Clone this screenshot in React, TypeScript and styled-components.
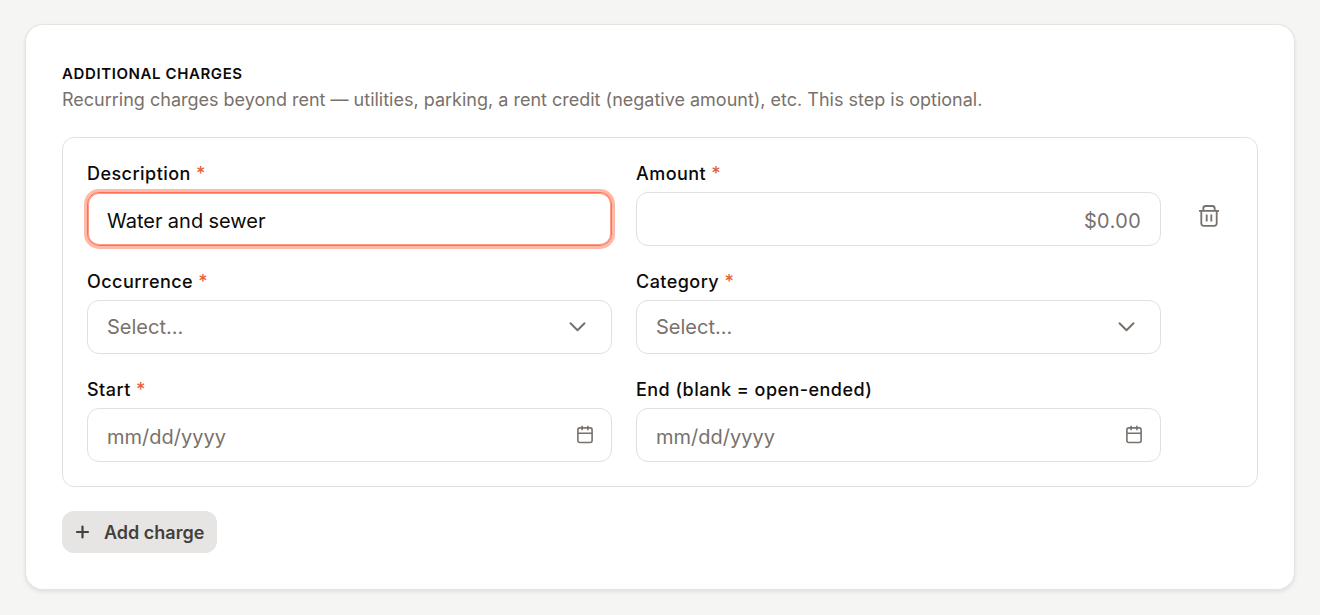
import React, { useId } from "react";
import styled, { createGlobalStyle } from "styled-components";

const GlobalStyle = createGlobalStyle`
  *, *::before, *::after { box-sizing: border-box; }
  body {
    margin: 0;
    background: #f5f5f4;
    color: #0c0a09;
    font-family: Inter, "Liberation Sans", sans-serif;
    font-size: 18px;
    -webkit-font-smoothing: antialiased;
  }
  button, input, select { font: inherit; letter-spacing: inherit; color: inherit; }
`;

const Page = styled.main`
  padding: 24px 25px;
`;

const Card = styled.section`
  display: flex;
  flex-direction: column;
  gap: 24px;
  padding: 37px 36px 36px;
  background: #fff;
  border: 1px solid #e5e4e3;
  border-radius: 18px;
  box-shadow: 0 2px 4px rgba(12, 10, 9, 0.09);
`;

const Title = styled.h2`
  margin: 0;
  font-size: 15px;
  font-weight: 600;
  line-height: 24px;
  letter-spacing: 0.04em;
  text-transform: uppercase;
`;

const Subtitle = styled.p`
  margin: 0;
  line-height: 27px;
  color: #79716b;
`;

const ChargeBox = styled.div`
  display: flex;
  align-items: flex-start;
  gap: 24px;
  padding: 24px;
  border: 1px solid #e0e0e0;
  border-radius: 12px;
`;

const FieldGrid = styled.div`
  flex: 1;
  display: grid;
  grid-template-columns: repeat(2, minmax(0, 1fr));
  gap: 24px;
`;

const FieldRoot = styled.div`
  display: flex;
  flex-direction: column;
  gap: 6px;
`;

const Label = styled.label`
  line-height: 24px;
  font-weight: 500;
  letter-spacing: 0.025em;
`;

const Required = styled.span`
  color: #e2603a;
`;

const Control = styled.div`
  display: flex;
  align-items: center;
  height: 54px;
  background: #fff;
  border: 1px solid #e0e0e0;
  border-radius: 12px;
  color: #79716b;

  &:has(input:focus) {
    border-color: #ff6f50;
    box-shadow: 0 0 0 3px #ffb9a9, inset 0 0 0 1px #ff9c86;
  }
`;

const TextInput = styled.input<{ $align?: "right" }>`
  flex: 1;
  min-width: 0;
  height: 52px;
  padding: 4px 19px 0;
  border: 0;
  outline: 0;
  background: transparent;
  font-size: 20px;
  font-variant-numeric: tabular-nums;
  text-align: ${(p) => p.$align ?? "left"};
  color: #0c0a09;
  caret-color: transparent;

  &::placeholder { color: #79716b; opacity: 1; }
`;

const SelectWrap = styled(Control)`
  display: grid;
  grid-template-columns: minmax(0, 1fr);

  > * { grid-area: 1 / 1; }
  > svg { justify-self: end; margin-right: 24px; pointer-events: none; }
`;

const SelectInput = styled.select`
  appearance: none;
  width: 100%;
  height: 52px;
  padding: 0 48px 0 19px;
  border: 0;
  outline: 0;
  background: transparent;
  font-size: 20px;
  color: #79716b;
`;

const IconButton = styled.button`
  display: grid;
  place-items: center;
  flex: none;
  padding: 0;
  border: 0;
  background: transparent;
  color: #79716b;
  cursor: pointer;
`;

const PickerButton = styled(IconButton)`
  width: 20px;
  height: 20px;
  margin-right: 16px;
`;

const RemoveButton = styled(IconButton)`
  width: 48px;
  height: 48px;
  margin-top: 30px;
`;

const AddButton = styled.button`
  display: flex;
  align-items: center;
  align-self: flex-start;
  gap: 12px;
  height: 42px;
  padding: 0 13px 0 12px;
  border: 0;
  border-radius: 12px;
  background: #e7e5e4;
  color: #44403b;
  font-weight: 600;
  cursor: pointer;
`;

function Chevron() {
  return (
    <svg width="20" height="20" viewBox="0 0 20 20" fill="none" stroke="currentColor" strokeWidth="2" strokeLinecap="round" strokeLinejoin="round" aria-hidden="true">
      <path d="M3.5 6.2l7 7 7-7" />
    </svg>
  );
}

function CalendarIcon() {
  return (
    <svg width="20" height="20" viewBox="0 0 20 20" fill="none" stroke="currentColor" strokeWidth="1.6" strokeLinecap="butt" strokeLinejoin="round" aria-hidden="true">
      <rect x="2.9" y="2.9" width="14.2" height="14.6" rx="2" />
      <path d="M2.9 8.3h14.2M7.1 0.8v4.4M12.9 0.8v4.4" />
    </svg>
  );
}

function TrashIcon() {
  return (
    <svg width="24" height="24" viewBox="0 0 24 24" fill="none" stroke="currentColor" strokeWidth="1.8" strokeLinecap="butt" strokeLinejoin="round" aria-hidden="true">
      <path d="M2 6.8h20M4.3 6.8v12.6a2.4 2.4 0 0 0 2.4 2.4h10.6a2.4 2.4 0 0 0 2.4-2.4V6.8M6.3 6.8V4.4a2.4 2.4 0 0 1 2.4-2.4h6.6a2.4 2.4 0 0 1 2.4 2.4v2.4M9.7 10.5v7M14.3 10.5v7" />
    </svg>
  );
}

function PlusIcon() {
  return (
    <svg width="18" height="18" viewBox="0 0 18 18" fill="none" stroke="currentColor" strokeWidth="2.2" strokeLinecap="round" aria-hidden="true">
      <path d="M8.5 3.5v11M3 9h11" />
    </svg>
  );
}

interface FieldProps {
  label: string;
  required?: boolean;
  children: (id: string) => React.ReactNode;
}

function Field({ label, required, children }: FieldProps) {
  const id = useId();
  return (
    <FieldRoot>
      <Label htmlFor={id}>
        {label}
        {required && <Required> *</Required>}
      </Label>
      {children(id)}
    </FieldRoot>
  );
}

function SelectField({ label }: { label: string }) {
  return (
    <Field label={label} required>
      {(id) => (
        <SelectWrap>
          <SelectInput id={id} defaultValue="">
            <option value="">Select...</option>
          </SelectInput>
          <Chevron />
        </SelectWrap>
      )}
    </Field>
  );
}

function DateField({ label, required }: { label: string; required?: boolean }) {
  return (
    <Field label={label} required={required}>
      {(id) => (
        <Control>
          <TextInput id={id} placeholder="mm/dd/yyyy" inputMode="numeric" />
          <PickerButton type="button" aria-label="Open calendar">
            <CalendarIcon />
          </PickerButton>
        </Control>
      )}
    </Field>
  );
}

export default function App() {
  return (
    <>
      <GlobalStyle />
      <Page>
        <Card>
          <header>
            <Title>Additional charges</Title>
            <Subtitle>
              Recurring charges beyond rent — utilities, parking, a rent credit (negative amount), etc. This step is optional.
            </Subtitle>
          </header>
          <ChargeBox>
            <FieldGrid>
              <Field label="Description" required>
                {(id) => (
                  <Control>
                    <TextInput id={id} defaultValue="Water and sewer" autoFocus />
                  </Control>
                )}
              </Field>
              <Field label="Amount" required>
                {(id) => (
                  <Control>
                    <TextInput id={id} placeholder="$0.00" inputMode="decimal" $align="right" />
                  </Control>
                )}
              </Field>
              <SelectField label="Occurrence" />
              <SelectField label="Category" />
              <DateField label="Start" required />
              <DateField label="End (blank = open-ended)" />
            </FieldGrid>
            <RemoveButton type="button" aria-label="Remove charge">
              <TrashIcon />
            </RemoveButton>
          </ChargeBox>
          <AddButton type="button">
            <PlusIcon />
            Add charge
          </AddButton>
        </Card>
      </Page>
    </>
  );
}
